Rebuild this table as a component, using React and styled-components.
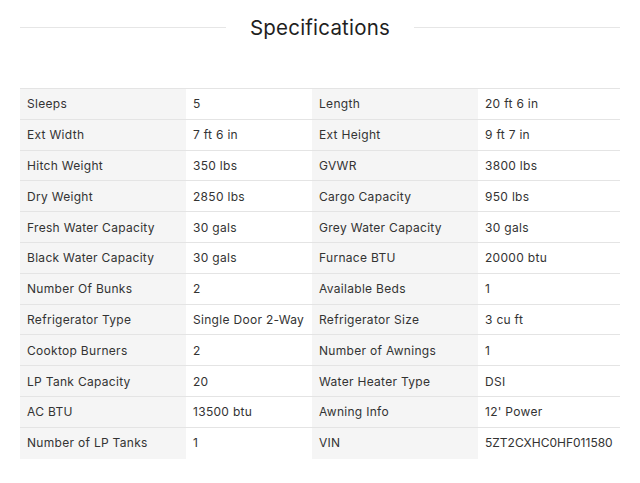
import React from "react";
import styled, { createGlobalStyle } from "styled-components";

const GlobalStyle = createGlobalStyle`
  html, body { margin: 0; padding: 0; background: #ffffff; }
  body { font-family: Inter, "Open Sans", "Liberation Sans", sans-serif; }
`;

const Page = styled.div`
  width: 640px;
  box-sizing: border-box;
  padding: 0 20px;
`;

const Header = styled.div`
  display: flex;
  align-items: center;
  gap: 24px;
  height: 54px;
  margin-bottom: 34px;
`;

const Rule = styled.div`
  flex: 1;
  height: 1px;
  background: #e6e6e6;
`;

const Title = styled.h2`
  margin: 0;
  font-size: 20.5px;
  font-weight: 400;
  color: #1f1f1f;
  letter-spacing: 0.2px;
`;

const Table = styled.div`
  display: grid;
  grid-template-columns: 166px 126px 166px 142px;
  border-top: 1px solid #e4e4e4;
`;

const Cell = styled.div`
  height: 29.8px;
  display: flex;
  align-items: center;
  padding: 0 7px;
  font-size: 12px;
  letter-spacing: ${(p) => (p.$code ? "0" : "0.3px")};
  color: #333333;
  background: ${(p) => (p.$label ? "#f5f5f5" : "#ffffff")};
  border-bottom: 1px solid ${(p) => (p.$last ? "transparent" : "#e4e4e4")};
  white-space: nowrap;
`;

const rows = [
  ["Sleeps", "5", "Length", "20 ft 6 in"],
  ["Ext Width", "7 ft 6 in", "Ext Height", "9 ft 7 in"],
  ["Hitch Weight", "350 lbs", "GVWR", "3800 lbs"],
  ["Dry Weight", "2850 lbs", "Cargo Capacity", "950 lbs"],
  ["Fresh Water Capacity", "30 gals", "Grey Water Capacity", "30 gals"],
  ["Black Water Capacity", "30 gals", "Furnace BTU", "20000 btu"],
  ["Number Of Bunks", "2", "Available Beds", "1"],
  ["Refrigerator Type", "Single Door 2-Way", "Refrigerator Size", "3 cu ft"],
  ["Cooktop Burners", "2", "Number of Awnings", "1"],
  ["LP Tank Capacity", "20", "Water Heater Type", "DSI"],
  ["AC BTU", "13500 btu", "Awning Info", "12' Power"],
  ["Number of LP Tanks", "1", "VIN", "5ZT2CXHC0HF011580"],
];

export default function App() {
  return (
    <>
      <GlobalStyle />
      <Page>
        <Header>
          <Rule />
          <Title>Specifications</Title>
          <Rule />
        </Header>
        <Table>
          {rows.map((r, i) =>
            r.map((t, j) => (
              <Cell
                key={`${i}-${j}`}
                $label={j % 2 === 0}
                $last={i === rows.length - 1}
                $code={t.length > 14 && /^[0-9A-Z]+$/.test(t)}
              >
                {t}
              </Cell>
            ))
          )}
        </Table>
      </Page>
    </>
  );
}
